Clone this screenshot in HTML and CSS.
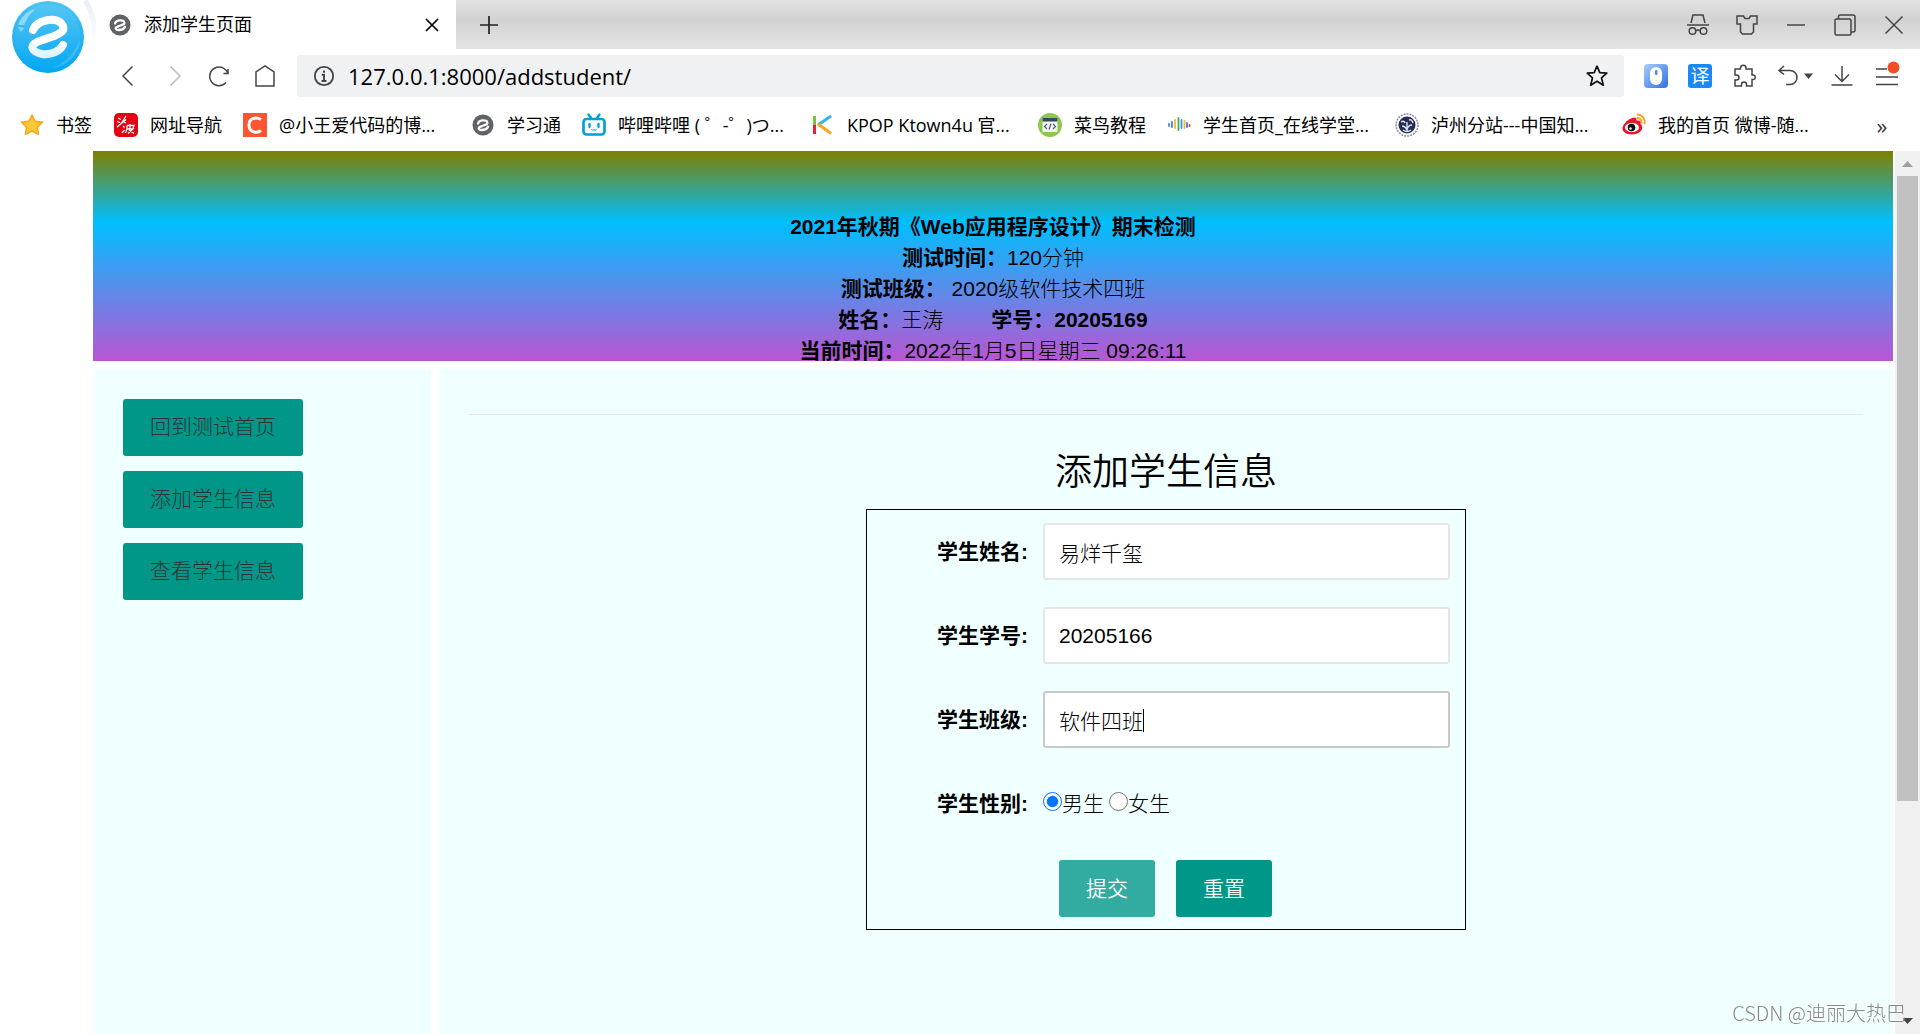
FILE: index.html
```html
<!DOCTYPE html>
<html lang="zh-CN">
<head>
<meta charset="utf-8">
<meta name="viewport" content="width=device-width, initial-scale=1">
<title>添加学生页面</title>
<link rel="stylesheet" href="styles.css">
</head>
<body>
<svg class="defs" width="0" height="0" aria-hidden="true">
  <symbol id="swirl" viewBox="0 0 24 24">
    <circle cx="12" cy="12" r="10.5" fill="#5f6368"/>
    <path d="M7 10.500C8 7 14.500 6.500 16 8.500C17.500 11 15 11.500 12.500 12.500L9 13.800C6.500 15 8 17 10.500 17C14 17 16 16 17 13.800" fill="none" stroke="#fff" stroke-width="2.300" stroke-linecap="round"/>
  </symbol>
</svg>

<header class="chrome">
  <div class="chrome-top">
    <div class="logo">
      <svg width="96" height="84" viewBox="0 0 96 84" aria-hidden="true">
        <defs>
          <linearGradient id="ball" x1="0" y1="0" x2="0" y2="1"><stop offset="0" stop-color="#55c8f5"/><stop offset=".5" stop-color="#2fb6f2"/><stop offset="1" stop-color="#00a8f3"/></linearGradient>
          <linearGradient id="stroke" x1="0" y1="0" x2="0" y2="1"><stop offset=".6" stop-color="#fff"/><stop offset="1" stop-color="#dff4fd"/></linearGradient>
          <linearGradient id="halo" x1="0" y1="0" x2="0" y2="1"><stop offset="0" stop-color="#dfe9ec"/><stop offset="1" stop-color="#fff"/></linearGradient>
        </defs>
        <path d="M85 0C93 12 96 26 95 46" fill="none" stroke="url(#halo)" stroke-width="5" stroke-opacity=".7"/>
        <circle cx="48" cy="37" r="36" fill="url(#ball)"/>
        <circle cx="48" cy="37" r="34" fill="none" stroke="#1f9fe0" stroke-opacity=".35" stroke-width="1"/>
        <path d="M18 25C21 17 27 11 35 9C29 15 27 19 24 25Z" fill="#fff" fill-opacity=".4"/>
        <path d="M18 27L24 28L21 32Z" fill="#fff" fill-opacity=".4"/>
        <path d="M52 68C68 66 79 54 80 40C74 54 66 62 52 68Z" fill="#fff" fill-opacity=".15"/>
        <path d="M33 30C37 20 54 17 61 23C67 30 61 33 54 36L37 42C29 46 32 52 42 54C52 55 60 51 63 45" fill="none" stroke="url(#stroke)" stroke-width="8" stroke-linecap="round"/>
      </svg>
    </div>
    <div class="chrome-main">
      <div class="tabstrip">
        <div class="tab">
          <svg class="icon" viewBox="0 0 24 24"><use href="#swirl"/></svg>
          <span class="tab-title">添加学生页面</span>
          <button class="icon-btn" aria-label="关闭标签页"><svg class="icon" viewBox="0 0 24 24"><path d="M6 6L18 18M18 6L6 18" stroke="#000" stroke-width="1.700"/></svg></button>
        </div>
        <div class="strip-rest">
          <button class="icon-btn" aria-label="新标签页"><svg class="icon" viewBox="0 0 24 24"><path d="M12 3V21M3 12H21" stroke="#222" stroke-width="1.700"/></svg></button>
          <div class="window-controls">
            <button class="icon-btn" aria-label="隐身"><svg class="icon line" viewBox="0 0 24 24"><path d="M5 10L7 2H17L19 10M1 12H23"/><circle cx="6.500" cy="18" r="3.300"/><circle cx="17.500" cy="18" r="3.300"/><path d="M10 18Q12 16 14 18"/></svg></button>
            <button class="icon-btn" aria-label="皮肤"><svg class="icon line" viewBox="0 0 24 24"><path d="M2 3H8.500L10 5.500H14L15.500 3H22V11H18.500V19L16.500 21H7.500L5.500 19V11H2Z"/></svg></button>
            <button class="icon-btn" aria-label="最小化"><svg class="icon line" viewBox="0 0 24 24"><path d="M3 12H21"/></svg></button>
            <button class="icon-btn" aria-label="还原"><svg class="icon line" viewBox="0 0 24 24"><rect x="2" y="6" width="16" height="16" rx="1.500"/><path d="M5.500 6V3.500Q5.500 2 7 2H20Q22 2 22 4V17Q22 19 20 19H18"/></svg></button>
            <button class="icon-btn" aria-label="关闭"><svg class="icon line" viewBox="0 0 24 24"><path d="M3.500 3.500L20.500 20.500M20.500 3.500L3.500 20.500"/></svg></button>
          </div>
        </div>
      </div>
      <div class="toolbar">
        <nav class="nav-buttons" aria-label="导航">
          <button class="icon-btn" aria-label="后退"><svg class="icon line" viewBox="0 0 24 24"><path d="M17.500 2.500L8 12L17.500 21.500"/></svg></button>
          <button class="icon-btn" aria-label="前进"><svg class="icon line faded" viewBox="0 0 24 24"><path d="M9.500 2.500L19 12L9.500 21.500"/></svg></button>
          <button class="icon-btn" aria-label="刷新"><svg class="icon line" viewBox="0 0 24 24"><path d="M19 18.500A9.300 9.300 0 1 1 21 10M16.500 9.500H21V5"/></svg></button>
          <button class="icon-btn" aria-label="主页"><svg class="icon line" viewBox="0 0 24 24"><path d="M3 22V8L12 2L21 8V22Z"/></svg></button>
        </nav>
        <div class="address">
          <svg class="icon" viewBox="0 0 24 24"><circle cx="12" cy="12" r="9.200" fill="none" stroke="#444" stroke-width="1.800"/><path d="M12 6.500V8.700M9.700 10.800H12V17M9.500 17H14.500" fill="none" stroke="#444" stroke-width="1.900"/></svg>
          <input class="address-input" type="text" aria-label="地址" value="127.0.0.1:8000/addstudent/">
          <button class="icon-btn" aria-label="收藏"><svg class="icon" viewBox="0 0 24 24"><path d="M12 2.200L14.800 8.700L21.800 9.200L16.500 13.800L18.300 21.200L12 17.300L5.700 21.200L7.500 13.800L2.200 9.200L9.200 8.700Z" fill="none" stroke="#111" stroke-width="1.700" stroke-linejoin="round"/></svg></button>
        </div>
        <div class="extensions">
          <button class="icon-btn" aria-label="鼠标手势"><svg class="icon" viewBox="0 0 24 24"><defs><linearGradient id="mouse" x1="0" y1="0" x2="1" y2="1"><stop offset="0" stop-color="#a9cdfb"/><stop offset="1" stop-color="#2f6fe0"/></linearGradient></defs><rect width="24" height="24" rx="4" fill="url(#mouse)"/><rect x="6" y="3" width="12" height="18" rx="6" fill="#fff"/><rect x="11" y="6" width="2.500" height="5" rx="1.200" fill="#4f8ae8"/></svg></button>
          <button class="icon-btn translate" aria-label="翻译">译</button>
          <button class="icon-btn" aria-label="扩展"><svg class="icon line" viewBox="0 0 24 24"><path d="M3 5H8.500V4A2.500 2.500 0 0 1 14 4V5H20V11H21.500A2.300 2.300 0 0 1 21.500 15.500H20V22H14.500V20.500A2.300 2.300 0 0 0 9.500 20.500V22H3V16H4.500A2.300 2.300 0 0 0 4.500 11H3Z"/></svg></button>
          <button class="icon-btn wide" aria-label="撤销"><svg width="36" height="24" class="line" viewBox="0 0 36 24"><path d="M8 2L3 6.500L8 10.500M3 6.500H14A7 7 0 0 1 14 20.500H10"/><path d="M28 9.500H37L32.500 15Z" fill="#444" stroke="none"/></svg></button>
          <button class="icon-btn" aria-label="下载"><svg class="icon line" viewBox="0 0 24 24"><path d="M10 2V17M3 10.500L10 17.500L17 10.500M-0.500 21H20.500"/></svg></button>
          <button class="icon-btn" aria-label="菜单"><svg class="icon line" viewBox="0 0 24 24"><path d="M0 5H11M0 13H22M0 20.500H22"/><circle cx="17.500" cy="3.500" r="6" fill="#f04e23" stroke="none"/></svg></button>
        </div>
      </div>
    </div>
  </div>

  <nav class="bookmarks" aria-label="书签">
    <a class="bookmark" href="#"><svg class="icon" viewBox="0 0 24 24"><path d="M12 2L15.200 8.300L22.500 9.200L17.300 14.200L18.600 21.300L12 18L5.400 21.300L6.700 14.200L1.500 9.200L8.800 8.300Z" fill="#ffc933" stroke="#f5a524" stroke-width="1.500" stroke-linejoin="round"/></svg>书签</a>
    <a class="bookmark" href="#"><svg class="icon" viewBox="0 0 24 24"><rect width="24" height="24" rx="5" fill="#e60012"/><path d="M4 5L7 6.500M3 8.500L6 9.500M12 3L7 11M3 14L12 6.500M10 9L12 10M9 13L10.500 14.500M8 20L10.500 17M13 12.500H20L19 15M13 12.500V16L11.500 20M16 11V16M13.500 16H19L14 20.500M15 17L20 20.500" fill="none" stroke="#fff" stroke-width="1.300"/></svg>网址导航</a>
    <a class="bookmark" href="#"><svg class="icon" viewBox="0 0 24 24"><rect width="24" height="24" fill="#fc5531"/><path d="M18 6.500C12 3 6 6 6 12C6 19 13 21 18 17.500" fill="none" stroke="#fff" stroke-width="3"/></svg>@小王爱代码的博...</a>
    <a class="bookmark" href="#"><svg class="icon" viewBox="0 0 24 24"><use href="#swirl"/></svg>学习通</a>
    <a class="bookmark" href="#"><svg class="icon" viewBox="0 0 24 24"><path d="M6.500 1.500L9 5M17.500 1.500L15 5" stroke="#00a1d6" stroke-width="2.500" stroke-linecap="round"/><rect x="1.500" y="6" width="21" height="15.500" rx="3" fill="#fff" stroke="#00a1d6" stroke-width="2.700"/><path d="M7.500 11V14M16.500 11V14" stroke="#00a1d6" stroke-width="2.300" stroke-linecap="round"/><path d="M9.500 16.500Q11 18 12 16.500Q13 18 14.500 16.500" fill="none" stroke="#00a1d6" stroke-width="1"/></svg>哔哩哔哩 ( ゜-゜)つ...</a>
    <a class="bookmark" href="#"><svg class="icon" viewBox="0 0 24 24"><path d="M3.500 3V12" stroke="#7ac143" stroke-width="3"/><path d="M3.500 12V21" stroke="#e2203c" stroke-width="3"/><path d="M20 3L7 12" stroke="#35b6e6" stroke-width="3"/><path d="M7 11L20 20.500" stroke="#f9a51a" stroke-width="3"/></svg>KPOP Ktown4u 官...</a>
    <a class="bookmark" href="#"><svg class="icon" viewBox="0 0 24 24"><circle cx="12" cy="12" r="12" fill="#8cc84b"/><rect x="4.500" y="5" width="15" height="14" rx="1" fill="#f1f3f4"/><path d="M4.500 5H19.500V8.500H4.500Z" fill="#34495e"/><path d="M9 11L6.500 13.500L9 16M15 11L17.500 13.500L15 16M13 10.500L11 16.500" fill="none" stroke="#566573" stroke-width="1.200"/></svg>菜鸟教程</a>
    <a class="bookmark" href="#"><svg class="icon" viewBox="0 0 24 24"><g stroke-width="1.800" stroke-linecap="round"><path d="M2 11V13M5 9V14" stroke="#3b82f6"/><path d="M8 7V15" stroke="#f5b921"/><path d="M11.500 5V17" stroke="#3fae6a"/><path d="M14.500 7V15" stroke="#4a90e2"/><path d="M17.500 8V15" stroke="#f5b921"/><path d="M20 10V14" stroke="#3b82f6"/><path d="M22.500 12V13" stroke="#e2362c"/></g></svg>学生首页_在线学堂...</a>
    <a class="bookmark" href="#"><svg class="icon" viewBox="0 0 24 24"><circle cx="12" cy="12" r="11" fill="#fff" stroke="#8f94a0" stroke-width="1.600" stroke-dasharray="2 1"/><circle cx="12" cy="12" r="8.500" fill="#262c55"/><path d="M6 9Q9 7 10 10M14 7Q17 6 18 10M7 13Q10 13 12 17Q13 12 17 12M12 17V9M8 17Q12 20 16 17" fill="none" stroke="#dfe3ee" stroke-width="1.400"/></svg>泸州分站---中国知...</a>
    <a class="bookmark" href="#"><svg class="icon" viewBox="0 0 24 24"><path d="M10 5C13 3.500 15 5 14.500 7.500C18 7 19.500 8.500 18.500 11C22 13 21 21 10 21.500C3 21.500 0 18 0.500 14.500C1.500 10.500 6 6.500 10 5Z" fill="#e6162d"/><ellipse cx="10" cy="14.500" rx="7" ry="4.500" fill="#fff"/><circle cx="9.500" cy="14.500" r="3.800" fill="#111"/><circle cx="8.500" cy="15.500" r="1.200" fill="#fff"/><path d="M15.500 1.500A7.500 7.500 0 0 1 22.500 10.500M15.500 5A4 4 0 0 1 19.500 9.500" fill="none" stroke="#f7a11a" stroke-width="1.900" stroke-linecap="round"/></svg>我的首页 微博-随...</a>
    <button class="icon-btn more" aria-label="更多书签">»</button>
  </nav>
</header>

<div class="viewport">
  <div class="page">
    <section class="banner">
      <p><b>2021年秋期《Web应用程序设计》期末检测</b></p>
      <p><b>测试时间：</b>120分钟</p>
      <p><b>测试班级：</b> 2020级软件技术四班</p>
      <p><b>姓名：</b>王涛&emsp;&emsp;&nbsp;<b>学号：20205169</b></p>
      <p><b>当前时间：</b>2022年1月5日星期三 09:26:11</p>
    </section>
    <div class="columns">
      <aside class="sidebar">
        <a class="btn btn-dark" href="#">回到测试首页</a>
        <a class="btn btn-dark" href="#">添加学生信息</a>
        <a class="btn btn-dark" href="#">查看学生信息</a>
      </aside>
      <main class="content">
        <hr class="rule">
        <h1 class="title">添加学生信息</h1>
        <form class="form">
          <div class="row">
            <label class="label" for="name">学生姓名:</label>
            <div class="field"><input class="input" id="name" type="text" value="易烊千玺"></div>
          </div>
          <div class="row">
            <label class="label" for="number">学生学号:</label>
            <div class="field"><input class="input" id="number" type="text" value="20205166"></div>
          </div>
          <div class="row">
            <label class="label" for="class">学生班级:</label>
            <div class="field"><input class="input active" id="class" type="text" value="软件四班"><span class="caret"></span></div>
          </div>
          <div class="row" role="radiogroup" aria-labelledby="sex">
            <span class="label" id="sex">学生性别:</span>
            <div class="radios">
              <label class="radio"><input type="radio" name="sex" checked>男生</label>
              <label class="radio"><input type="radio" name="sex">女生</label>
            </div>
          </div>
          <div class="actions">
            <button class="btn btn-hover" type="submit">提交</button>
            <button class="btn" type="reset">重置</button>
          </div>
        </form>
      </main>
    </div>
  </div>
  <div class="scrollbar" aria-hidden="true">
    <svg width="21" height="25" viewBox="0 0 21 25"><path d="M5 16L10.500 10L16 16Z" fill="#a0a0a0"/></svg>
    <div class="track"><div class="thumb"></div></div>
    <svg width="21" height="25" viewBox="0 0 21 25"><path d="M5 9L10.500 15L16 9Z" fill="#444"/></svg>
  </div>
</div>
<div class="watermark">CSDN @迪丽大热巴</div>
</body>
</html>
```
FILE: styles.css
```css
* { box-sizing: border-box; }

body {
  margin: 0;
  height: 100vh;
  display: flex;
  flex-direction: column;
  overflow: hidden;
  background: #fff;
  color: #000;
  font: 300 21px/31px "Liberation Sans", "Noto Sans CJK SC", sans-serif;
}

button, input { font: inherit; color: inherit; }
p, h1 { margin: 0; }
b { font-weight: 700; }
.defs { position: absolute; }
.icon { display: block; width: 24px; height: 24px; flex: none; overflow: visible; }
.line { display: block; fill: none; stroke: #444; stroke-width: 1.5; overflow: visible; }
.faded { stroke: #bbb; }
.icon-btn {
  display: block;
  flex: none;
  width: 24px;
  height: 24px;
  padding: 0;
  border: 0;
  background: none;
}

/* browser frame */
.chrome { flex: none; font-family: "Open Sans", "Noto Sans CJK SC", sans-serif; font-weight: 400; }
.chrome-top { display: flex; height: 103px; }
.logo { width: 96px; flex: none; overflow: hidden; }
.logo svg { display: block; }
.chrome-main { flex: 1; min-width: 0; }
.tabstrip { display: flex; height: 49px; }
.tab {
  display: flex;
  align-items: center;
  gap: 12px;
  width: 360px;
  padding: 0 12px;
  font-size: 18px;
}
.tab-title { flex: 1; }
.strip-rest {
  flex: 1;
  display: flex;
  align-items: center;
  justify-content: space-between;
  padding: 0 14px 0 21px;
  background: linear-gradient(#e2e2e2, #d2d2d2 40%, #e4e4e4);
}
.window-controls { display: flex; gap: 25px; }
.toolbar { display: flex; align-items: center; height: 54px; padding: 0 20px 0 19px; }
.nav-buttons, .extensions { display: flex; gap: 22px; }
.extensions { gap: 20px; }
.address {
  flex: 1;
  display: flex;
  align-items: center;
  gap: 12px;
  height: 42px;
  margin: 0 20px;
  padding: 0 15px;
  border-radius: 3px;
  background: #f0f1f3;
}
.address-input {
  flex: 1;
  min-width: 0;
  padding: 0;
  border: 0;
  background: none;
  font-size: 22px;
}
.translate {
  border-radius: 3px;
  background: #1989fa;
  color: #fff;
  font-size: 19px;
  line-height: 24px;
  text-align: center;
}
.wide { width: 36px; }
.bookmarks {
  display: grid;
  grid-template-columns: 94px 129px 228px 111px 229px 227px 129px 228px 227px 1fr 24px;
  align-items: center;
  height: 48px;
  padding: 0 26px 4px 20px;
  font-size: 18px;
}
.bookmark {
  display: flex;
  align-items: center;
  gap: 12px;
  color: #000;
  text-decoration: none;
  white-space: nowrap;
}
.more { font-size: 22px; line-height: 16px; color: #333; }

/* page area */
.viewport { flex: 1; min-height: 0; display: flex; }
.page {
  flex: 1;
  min-width: 0;
  display: flex;
  flex-direction: column;
  gap: 8px;
  margin: 0 2px 0 93px;
}
.banner {
  flex: none;
  height: 210px;
  padding-top: 60px;
  overflow: hidden;
  text-align: center;
  background: linear-gradient(olive, deepskyblue 34%, mediumorchid);
}
.columns { flex: 1; display: flex; gap: 8px; }
.sidebar, .content { padding: 30px; background: azure; }
.sidebar {
  width: 338px;
  display: flex;
  flex-direction: column;
  align-items: flex-start;
  gap: 15px;
}
.content { flex: 1; }
.btn {
  display: block;
  height: 57px;
  padding: 0 27px;
  border: 0;
  border-radius: 3px;
  background: #009688;
  color: #fff;
  font-weight: 350;
  line-height: 56px;
  text-decoration: none;
  white-space: nowrap;
}
.btn-dark { color: #333; font-weight: 300; }
.btn-hover { background: #32aba0; }
.rule { margin: 15px 0 30px; border: 0; border-top: 1px solid #e6e6e6; }
.title { font-size: 37px; font-weight: 350; line-height: 56px; text-align: center; }
.form {
  width: 600px;
  margin: 8px auto 0;
  padding: 13px 15px 12px 0;
  border: 1px solid #000;
}
.row { display: flex; align-items: center; height: 57px; margin-bottom: 27px; }
.label { width: 176px; padding-right: 15px; font-weight: 700; text-align: right; }
.field { flex: 1; position: relative; }
.input {
  display: block;
  width: 100%;
  height: 57px;
  padding: 0 14px;
  border: 2px solid #e6e6e6;
  border-radius: 3px;
  background: #fff;
  outline: 0;
}
.active { border-color: #c9c9c9; }
.caret { position: absolute; left: 100px; top: 18px; width: 1px; height: 23px; background: #000; }
.radios { display: flex; gap: 5px; }
.radio { display: flex; align-items: center; }
.radio input { width: 19px; height: 19px; margin: 0 0 4px; }
.actions { display: flex; gap: 21px; padding: 1px 0 0 192px; }

.scrollbar {
  width: 25px;
  padding: 0 2px;
  display: flex;
  flex-direction: column;
  background: #f0f0f0;
}
.track { flex: 1; }
.thumb { height: 75%; background: #c1c1c1; }
.watermark {
  position: fixed;
  right: 14px;
  bottom: 6px;
  color: #888;
  font-family: "Noto Sans CJK SC", sans-serif;
  font-size: 20px;
  text-shadow: -1px -1px 0 #fff;
}
```
